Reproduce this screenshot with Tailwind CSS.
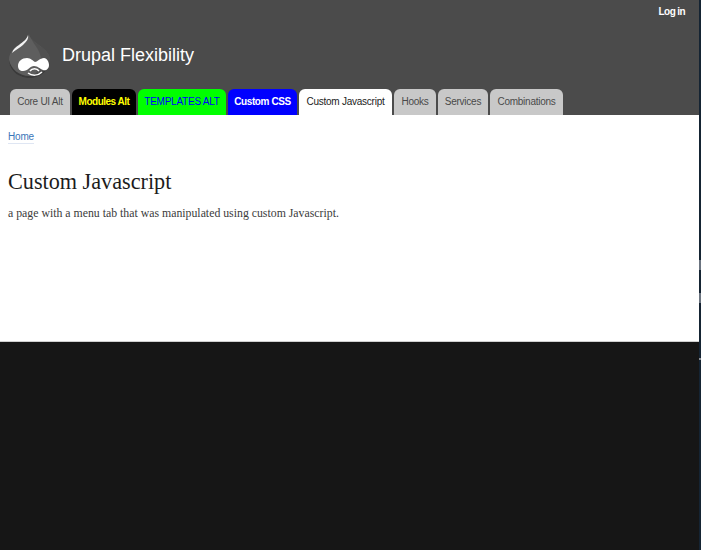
<!DOCTYPE html>
<html>
<head>
<meta charset="utf-8">
<script src="https://cdn.jsdelivr.net/npm/@tailwindcss/browser@4"></script>
</head>
<body class="h-[550px] w-[701px] overflow-hidden bg-[#161616] font-['Liberation_Sans',sans-serif]">
<div class="flex h-[550px] w-[701px]">
  <div class="flex w-[699px] flex-col">
    <header class="h-[115px] bg-[#4b4b4b] flex flex-col">
      <div class="flex justify-end pr-[14px] pt-[5px] h-[26px]">
        <a class="text-[10px] leading-[14px] font-bold text-white tracking-[-0.6px]">Log in</a>
      </div>
      <div class="flex items-center h-[58px] pl-[8px]">
        <svg class="w-[44px] h-[50px]" viewBox="0 0 44 50">
          <path d="M21 4 C22 9 27 12 32 16 C38 20 42 25 42 30 C42 40 33 48 21.5 48 C10 48 1 40 1 30 C1 21 8 17 13 13 C17 10 20 8 21 4Z" fill="#5e5e5e"/>
          <path d="M21 4 C22 9 27 12 32 16 C38 20 42 25 42 30 C42 40 33 48 21.5 48 C29 44 34 36 33 28 C32 19 24 13 21 4Z" fill="#515151"/>
          <path d="M1 30 C1 40 10 48 21.5 48 C33 48 42 40 42 30 C41 39 32 46 21.5 46 C11 46 3 39 1 30Z" fill="#3a3a3a"/>
          <path d="M20 5 C19 9 15 12 11 15 C8 17 5 19 4 23 C7 20 12 18 15 15 C18 12 21 9 20 5Z" fill="#f2f2f2"/>
          <path d="M10 36 C10 31 14 28 19 28 C23 28 25 31 27 32 C29 32 32 28 36 28 C39 28 41 32 41 35 C41 39 38 41 35 40 C32 39 30 36 26 36 C22 36 20 41 15 41 C12 41 10 39 10 36Z" fill="#ffffff"/>
          <path d="M22 41 C24 38 29 38 31 41" fill="none" stroke="#ffffff" stroke-width="1.5"/>
          <path d="M20 43 C24 46 30 46 34 42" fill="none" stroke="#ffffff" stroke-width="1.5"/>
        </svg>
        <span class="ml-[10px] text-[18px] leading-[24px] text-white">Drupal Flexibility</span>
      </div>
      <nav class="flex gap-[2px] pl-[10px] h-[26px] mt-[5px] text-[10px] leading-[26px] text-center tracking-[-0.25px]">
        <a class="w-[60px] bg-[#c8c8c8] text-[#4a4a4a] rounded-t-[6px]">Core UI Alt</a>
        <a class="w-[64px] bg-black text-[#ffff00] font-bold rounded-t-[6px] tracking-[-0.5px]">Modules Alt</a>
        <a class="w-[88px] bg-[#00ff00] text-[#0000ff] rounded-t-[6px]">TEMPLATES ALT</a>
        <a class="w-[69px] bg-[#0000ff] text-white font-bold rounded-t-[6px] tracking-[-0.4px]">Custom CSS</a>
        <a class="w-[93px] bg-white text-[#222] rounded-t-[6px]">Custom Javascript</a>
        <a class="w-[42px] bg-[#c8c8c8] text-[#4a4a4a] rounded-t-[6px]">Hooks</a>
        <a class="w-[50px] bg-[#c8c8c8] text-[#4a4a4a] rounded-t-[6px]">Services</a>
        <a class="w-[73px] bg-[#c8c8c8] text-[#4a4a4a] rounded-t-[6px]">Combinations</a>
      </nav>
    </header>
    <main class="h-[227px] bg-white pl-[8px] pt-[15px] border-b border-[#d0d0d0]">
      <div class="text-[10px] leading-[13px] tracking-[-0.2px]"><a class="text-[#3a75b8] border-b border-[#dfe6f3] inline-block">Home</a></div>
      <h1 class="mt-[24px] text-[22.2px] leading-[28px] text-[#1c1c1c] font-['Liberation_Serif',serif] font-normal">Custom Javascript</h1>
      <p class="mt-[9px] text-[11.8px] leading-[16px] text-[#3b3b3b] font-['Liberation_Serif',serif]">a page with a menu tab that was manipulated using custom Javascript.</p>
    </main>
    <div class="flex-1"></div>
  </div>
  <div class="w-[2px] bg-[#152433] flex flex-col">
    <div class="mt-[260px] h-[10px] bg-[#6b7480]"></div>
    <div class="mt-[23px] h-[10px] bg-[#6b7480]"></div>
    <div class="mt-[55px] h-[2px] bg-[#8a8f96]"></div>
  </div>
</div>
</body>
</html>
